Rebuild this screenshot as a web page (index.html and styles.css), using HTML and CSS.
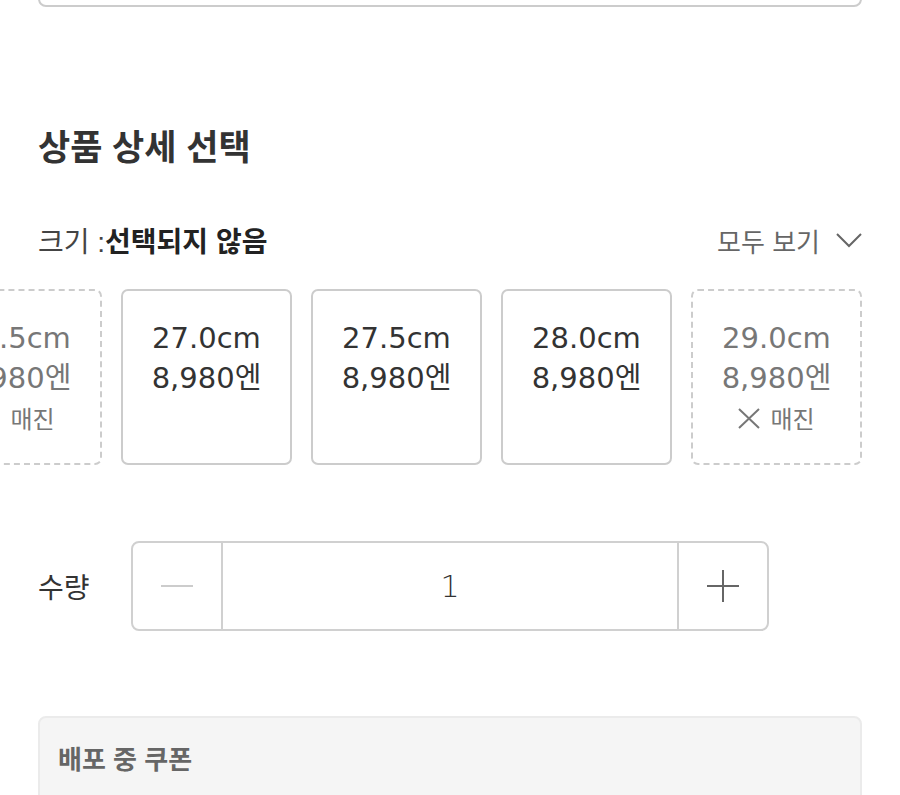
FILE: index.html
```html
<!DOCTYPE html>
<html lang="ko">
<head>
  <meta charset="UTF-8" />
  <meta name="viewport" content="width=device-width, initial-scale=1" />
  <title>상품 상세 선택</title>
  <link rel="stylesheet" href="styles.css">
</head>
<body>

  <div class="top-box"></div>

  <h2 class="title">상품 상세 선택</h2>

  <div class="size-row">
    <div class="size-label">크기 :<strong>선택되지 않음</strong></div>
    <div class="view-all">
      모두 보기
      <svg width="26" height="15" viewBox="0 0 26 15">
        <polyline points="1,1 13,13 25,1" fill="none" stroke="#666" stroke-width="2" />
      </svg>
    </div>
  </div>

  <div class="sizes">
    <div class="card soldout">
      <div>26.5cm</div>
      <div>8,980엔</div>
      <div class="note">
        <svg width="22" height="21" viewBox="0 0 22 21">
          <path d="M1 1 L21 20 M21 1 L1 20" stroke="#777" stroke-width="2" fill="none" />
        </svg>
        매진
      </div>
    </div>
    <div class="card">
      <div>27.0cm</div>
      <div>8,980엔</div>
    </div>
    <div class="card">
      <div>27.5cm</div>
      <div>8,980엔</div>
    </div>
    <div class="card">
      <div>28.0cm</div>
      <div>8,980엔</div>
    </div>
    <div class="card soldout">
      <div>29.0cm</div>
      <div>8,980엔</div>
      <div class="note">
        <svg width="22" height="21" viewBox="0 0 22 21">
          <path d="M1 1 L21 20 M21 1 L1 20" stroke="#777" stroke-width="2" fill="none" />
        </svg>
        매진
      </div>
    </div>
  </div>

  <div class="qty-row">
    <div class="qty-label">수량</div>
    <div class="stepper">
      <div class="step minus">
        <svg width="34" height="34" viewBox="0 0 34 34">
          <line x1="1" y1="17" x2="33" y2="17" stroke="#ccc" stroke-width="2" />
        </svg>
      </div>
      <div class="qty-value">1</div>
      <div class="step plus">
        <svg width="34" height="34" viewBox="0 0 34 34">
          <line x1="1" y1="17" x2="33" y2="17" stroke="#666" stroke-width="2" />
          <line x1="17" y1="1" x2="17" y2="33" stroke="#666" stroke-width="2" />
        </svg>
      </div>
    </div>
  </div>

  <div class="coupons">
    <div class="coupon-title">배포 중 쿠폰</div>
  </div>

</body>
</html>
```

FILE: styles.css
```css
body {
  font-family: "Liberation Sans", "Noto Sans CJK KR", sans-serif;
  background: #fff;
  margin: 0;
  padding: 0 38px;
  color: #333;
  overflow: hidden;
}

.top-box {
  height: 40px;
  margin-top: -33px;
  border: 2px solid #ccc;
  border-radius: 8px;
  box-sizing: border-box;
}

.title {
  margin: 121px 0 0;
  font-size: 35px;
  line-height: 40px;
  font-weight: bold;
  color: #333;
}

.size-row {
  margin-top: 54px;
  display: flex;
  justify-content: space-between;
  align-items: center;
  height: 36px;
}

.size-label {
  font-size: 28px;
  color: #444;
}

.size-label strong {
  color: #222;
}

.view-all {
  display: flex;
  align-items: center;
  gap: 16px;
  font-size: 26px;
  color: #666;
}

.sizes {
  margin: 31px 0 0 -38px;
  display: flex;
  justify-content: flex-end;
  gap: 19px;
  overflow: hidden;
}

.card {
  flex: none;
  width: 171px;
  height: 176px;
  box-sizing: border-box;
  border: 2px solid #ccc;
  border-radius: 7px;
  padding-top: 27px;
  text-align: center;
  font-family: "DejaVu Sans", "Noto Sans CJK KR", sans-serif;
  font-size: 29px;
  line-height: 40px;
  color: #333;
}

.card.soldout {
  border-style: dashed;
  color: #777;
}

.card .note {
  display: flex;
  align-items: center;
  justify-content: center;
  gap: 10px;
  font-family: "Noto Sans CJK KR", sans-serif;
  font-size: 24px;
}

.qty-row {
  margin-top: 76px;
  display: flex;
  align-items: center;
}

.qty-label {
  width: 93px;
  font-size: 28px;
  color: #333;
}

.stepper {
  display: flex;
  width: 638px;
  height: 90px;
  box-sizing: border-box;
  border: 2px solid #d0d0d0;
  border-radius: 8px;
}

.step {
  width: 88px;
  display: flex;
  align-items: center;
  justify-content: center;
}

.minus {
  border-right: 2px solid #d0d0d0;
}

.plus {
  border-left: 2px solid #d0d0d0;
}

.qty-value {
  flex: 1;
  display: flex;
  align-items: center;
  justify-content: center;
  font-family: "DejaVu Sans", sans-serif;
  font-size: 30px;
  font-weight: 300;
  color: #333;
}

.coupons {
  margin-top: 85px;
  height: 120px;
  background: #f5f5f5;
  border: 2px solid #ebebeb;
  border-radius: 8px;
  padding: 24px 18px 0;
}

.coupon-title {
  font-size: 26px;
  line-height: 36px;
  font-weight: bold;
  color: #666;
}
```
